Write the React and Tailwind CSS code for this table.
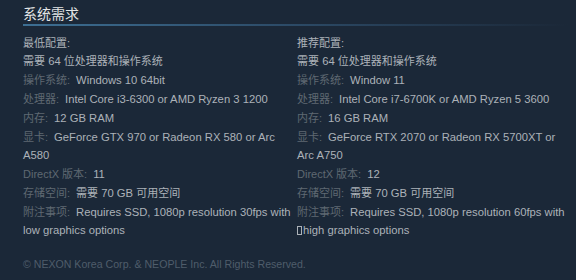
const C = ({ children }) => <span className="text-[11px]">{children}</span>;

const minReqs = [
  { label: "操作系统:", value: "Windows 10 64bit" },
  { label: "处理器:", value: "Intel Core i3-6300 or AMD Ryzen 3 1200" },
  { label: "内存:", value: "12 GB RAM" },
  { label: "显卡:", value: "GeForce GTX 970 or Radeon RX 580 or Arc A580" },
  { label: "DirectX 版本:", value: "11" },
  { label: "存储空间:", value: <><C>需要</C> 70 GB <C>可用空间</C></> },
  { label: "附注事项:", value: "Requires SSD, 1080p resolution 30fps with low graphics options" },
];

const recReqs = [
  { label: "操作系统:", value: "Window 11" },
  { label: "处理器:", value: "Intel Core i7-6700K or AMD Ryzen 5 3600" },
  { label: "内存:", value: "16 GB RAM" },
  { label: "显卡:", value: "GeForce RTX 2070 or Radeon RX 5700XT or Arc A750" },
  { label: "DirectX 版本:", value: "12" },
  { label: "存储空间:", value: <><C>需要</C> 70 GB <C>可用空间</C></> },
  {
    label: "附注事项:",
    value: (
      <>
        Requires SSD, 1080p resolution 60fps with{" "}
        <span className="inline-block w-[5px] h-[9px] border border-[#acb2b8] align-[-1px] mr-[1px]"></span>
        high graphics options
      </>
    ),
  },
];

const ReqColumn = ({ title, items }) => {
  return (
    <div className="w-[272px]">
      <div className="text-[#acb2b8] text-[11px] leading-[18px]">{title}</div>
      <ul>
        <li className="text-[#acb2b8] leading-[18px] mb-[1px]">
          <C>需要</C> 64 <C>位处理器和操作系统</C>
        </li>
        {items.map((item, i) => (
          <li key={i} className="leading-[18px] mb-[1px] text-[#acb2b8]">
            <span className="text-[#5f6872] text-[11px]">{item.label}</span>
            <span className="ml-[6px]">{item.value}</span>
          </li>
        ))}
      </ul>
    </div>
  );
};

export default function App() {
  return (
    <div
      className="w-[576px] h-[280px] bg-[#1b2838] pt-[6px] pl-[23px] text-[11.25px]"
      style={{ fontFamily: '"Liberation Sans", "Noto Sans CJK SC", sans-serif' }}
    >
      {/* header */}
      <div className="relative h-[20px]">
        <h2 className="text-[14px] leading-[16px] text-[#e3e5e6]">系统需求</h2>
        <div className="absolute left-0 bottom-0 h-[2px] w-[545px] bg-gradient-to-r from-[#3d6f93] via-[#2c4a66] to-[#1b2838]"></div>
      </div>

      <div className="flex gap-[2px] mt-[8px]">
        <ReqColumn title="最低配置:" items={minReqs} />
        <ReqColumn title="推荐配置:" items={recReqs} />
      </div>

      <div className="mt-[17px] text-[10.6px] text-[#4f5d6b] leading-[14px]">
        © NEXON Korea Corp. &amp; NEOPLE Inc. All Rights Reserved.
      </div>
    </div>
  );
}
